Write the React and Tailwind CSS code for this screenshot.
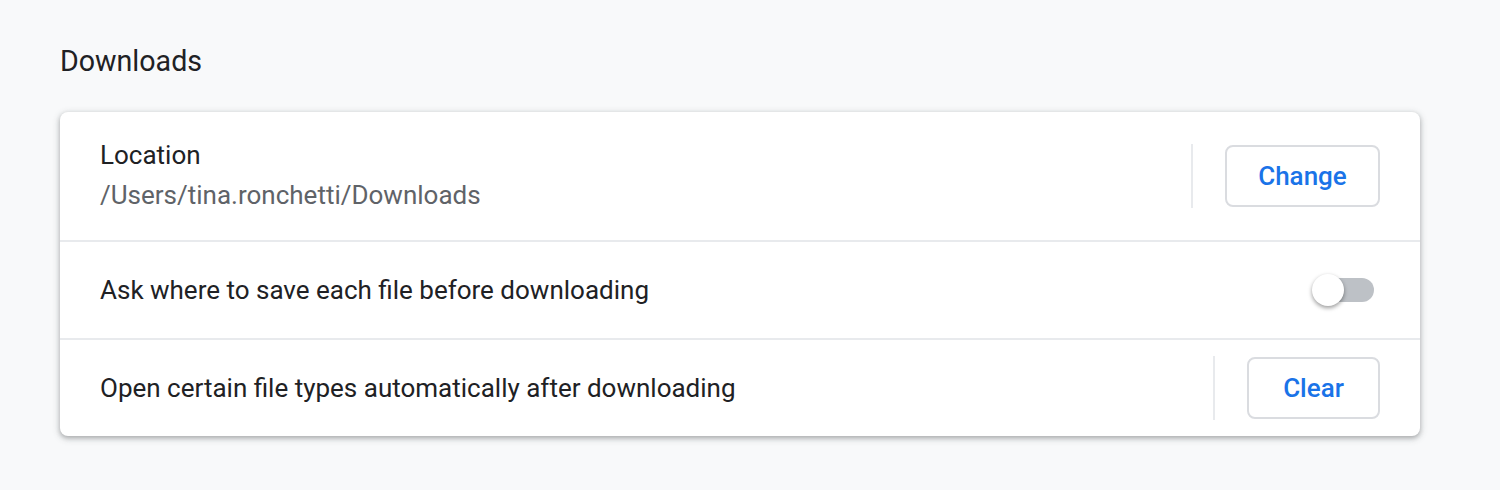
import React, { useState } from 'react';

function Toggle({ checked, onChange }) {
  return (
    <button
      type="button"
      onClick={() => onChange(!checked)}
      className="relative mr-[6px] h-[32px] w-[62px] shrink-0"
    >
      <span className={`absolute right-0 top-[4px] h-[24px] w-[56px] rounded-full ${checked ? 'bg-[#8ab4f8]' : 'bg-[#bdc1c6]'}`} />
      <span
        className={`absolute top-0 h-[32px] w-[32px] rounded-full shadow-[0_2px_4px_rgba(0,0,0,0.4)] ${checked ? 'left-[30px] bg-[#1a73e8]' : 'left-0 bg-white'}`}
      />
    </button>
  );
}

function ActionButton({ children, className }) {
  return (
    <button
      type="button"
      className={`h-[62px] rounded-[8px] border-2 border-[#dadce0] bg-white text-[26px] font-medium text-[#1a73e8] ${className}`}
    >
      {children}
    </button>
  );
}

function Separator() {
  return <div className="mx-[32px] h-[64px] w-[2px] bg-[#e8eaed]" />;
}

export default function App() {
  const [askWhere, setAskWhere] = useState(false);

  return (
    <div className="min-h-[490px] bg-[#f8f9fa] pl-[60px] pr-[80px] pt-[41px] font-['Roboto',sans-serif] text-[#202124]">
      <h2 className="mb-[31px] text-[28.6px] leading-[40px] font-normal">Downloads</h2>

      <div className="rounded-[8px] bg-white shadow-[0_2px_4px_0_rgba(60,64,67,0.3),0_2px_6px_2px_rgba(60,64,67,0.15)]">
        <div className="flex h-[128px] items-center px-[40px]">
          <div className="flex-1 text-[26px] leading-[40px]">
            <div className="-mt-[2px]">Location</div>
            <div className="text-[#5f6368]">/Users/tina.ronchetti/Downloads</div>
          </div>
          <Separator />
          <ActionButton className="w-[155px]">Change</ActionButton>
        </div>

        <div className="flex h-[98px] items-center border-t-2 border-[#e8eaed] px-[40px]">
          <div className="flex-1 text-[26px] leading-[40px]">Ask where to save each file before downloading</div>
          <Toggle checked={askWhere} onChange={setAskWhere} />
        </div>

        <div className="flex h-[98px] items-center border-t-2 border-[#e8eaed] px-[40px]">
          <div className="flex-1 text-[26px] leading-[40px]">Open certain file types automatically after downloading</div>
          <Separator />
          <ActionButton className="w-[133px]">Clear</ActionButton>
        </div>
      </div>
    </div>
  );
}
